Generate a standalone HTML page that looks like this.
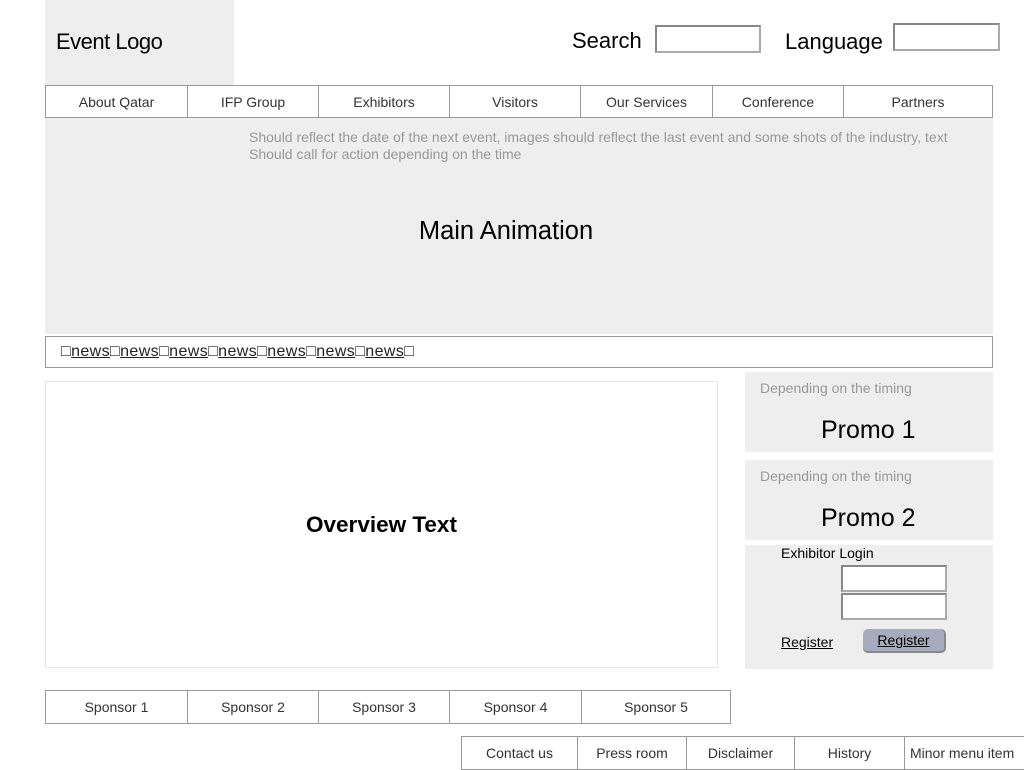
<!DOCTYPE html>
<html><head><meta charset="utf-8"><style>
*{margin:0;padding:0;box-sizing:border-box}
body{width:1024px;height:768px;position:relative;background:#fff;font-family:"Liberation Sans",sans-serif;overflow:hidden;color:#000}
.a{position:absolute}
.cell{position:absolute;border:1px solid #999;display:flex;align-items:center;justify-content:center;font-size:14px;color:#333;background:#fff}
.inp{position:absolute;background:#fff;border:2px solid #888;border-right-color:#aaa;border-bottom-color:#aaa}
</style></head><body>
<div class="a" style="left:45px;top:0;width:189px;height:86px;background:#eee"></div>
<div class="a" style="left:56px;top:29px;font-family:'Liberation Sans',sans-serif;font-size:22px;letter-spacing:-0.5px">Event Logo</div>
<div class="a" style="left:572px;top:28px;font-size:22px">Search</div>
<div class="inp" style="left:655px;top:25px;width:106px;height:28px"></div>
<div class="a" style="left:785px;top:29px;font-size:22px">Language</div>
<div class="inp" style="left:893px;top:23px;width:107px;height:28px"></div>

<div class="cell" style="left:45px;top:85px;width:143px;height:33px">About Qatar</div>
<div class="cell" style="left:187px;top:85px;width:132px;height:33px">IFP Group</div>
<div class="cell" style="left:318px;top:85px;width:132px;height:33px">Exhibitors</div>
<div class="cell" style="left:449px;top:85px;width:132px;height:33px">Visitors</div>
<div class="cell" style="left:580px;top:85px;width:133px;height:33px">Our Services</div>
<div class="cell" style="left:712px;top:85px;width:132px;height:33px">Conference</div>
<div class="cell" style="left:843px;top:85px;width:150px;height:33px">Partners</div>

<div class="a" style="left:45px;top:118px;width:948px;height:216px;background:#eee"></div>
<div class="a" style="left:249px;top:129px;font-size:14px;color:#999;line-height:17px">Should reflect the date of the next event, images should reflect the last event and some shots of the industry, text<br>Should call for action depending on the time</div>
<div class="a" style="left:0;top:217px;width:1012px;text-align:center;font-size:25.5px">Main Animation</div>

<div class="a" style="left:45px;top:336px;width:948px;height:32px;border:1px solid #999;padding:6px 0 0 15px;font-size:16px;color:#222;letter-spacing:0.4px">□<u>news</u>□<u>news</u>□<u>news</u>□<u>news</u>□<u>news</u>□<u>news</u>□<u>news</u>□</div>

<div class="a" style="left:45px;top:381px;width:673px;height:287px;border:1px solid #e6e6e6;display:flex;align-items:center;justify-content:center;font-size:22.5px;font-weight:bold">Overview Text</div>

<div class="a" style="left:745px;top:372px;width:248px;height:80px;background:#eee"></div>
<div class="a" style="left:760px;top:380px;font-size:14px;color:#999">Depending on the timing</div>
<div class="a" style="left:821px;top:416px;font-size:25px">Promo 1</div>
<div class="a" style="left:745px;top:460px;width:248px;height:80px;background:#eee"></div>
<div class="a" style="left:760px;top:468px;font-size:14px;color:#999">Depending on the timing</div>
<div class="a" style="left:821px;top:504px;font-size:25px">Promo 2</div>

<div class="a" style="left:745px;top:545px;width:248px;height:124px;background:#eee"></div>
<div class="a" style="left:781px;top:545px;font-size:14px">Exhibitor Login</div>
<div class="inp" style="left:841px;top:565px;width:106px;height:27px"></div>
<div class="inp" style="left:841px;top:593px;width:106px;height:27px"></div>
<div class="a" style="left:781px;top:634px;font-size:14px;text-decoration:underline">Register</div>
<div class="a" style="left:863px;top:629px;width:83px;height:24px;background:#a6abbd;border-radius:5px;border-right:2px solid #888;border-bottom:2px solid #888;text-align:center;font-size:14px;line-height:22px;text-decoration:underline">Register</div>

<div class="cell" style="left:45px;top:690px;width:143px;height:34px">Sponsor 1</div>
<div class="cell" style="left:187px;top:690px;width:132px;height:34px">Sponsor 2</div>
<div class="cell" style="left:318px;top:690px;width:132px;height:34px">Sponsor 3</div>
<div class="cell" style="left:449px;top:690px;width:133px;height:34px">Sponsor 4</div>
<div class="cell" style="left:581px;top:690px;width:150px;height:34px">Sponsor 5</div>

<div class="cell" style="left:461px;top:736px;width:117px;height:34px">Contact us</div>
<div class="cell" style="left:577px;top:736px;width:110px;height:34px">Press room</div>
<div class="cell" style="left:686px;top:736px;width:109px;height:34px">Disclaimer</div>
<div class="cell" style="left:794px;top:736px;width:111px;height:34px">History</div>
<div class="cell" style="left:904px;top:736px;width:122px;height:34px;justify-content:flex-start;padding-left:5px">Minor menu item</div>
</body></html>
